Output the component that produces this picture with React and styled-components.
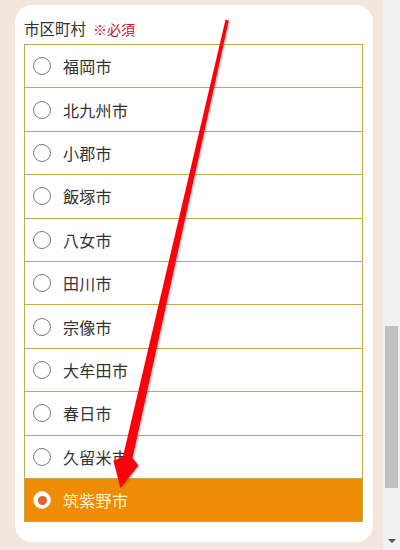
import React from 'react'
import styled, { createGlobalStyle } from 'styled-components'

const GlobalStyle = createGlobalStyle`
  html, body {
    margin: 0;
    padding: 0;
    background: #f3e6dd;
  }
  body {
    font-family: "Noto Sans CJK JP", "Noto Sans", sans-serif;
    color: #333;
  }
`

const Page = styled.div`
  position: relative;
  display: flex;
  width: 400px;
  height: 550px;
  overflow: hidden;
  background: #f3e6dd;
`

const Main = styled.div`
  flex: 1;
  padding: 5px 10px 0 15px;
`

const Card = styled.div`
  background: #fff;
  border-radius: 17px;
  padding: 12px 10px 20px 9px;
`

const Label = styled.div`
  display: flex;
  align-items: baseline;
  gap: 7px;
  height: 22px;
  line-height: 22px;
  margin-bottom: 5px;
  font-size: 15.5px;
  color: #333;
`

const Required = styled.span`
  font-size: 14px;
  color: #c4161c;
`

const List = styled.div`
  border: 1px solid #c6a84c;
  border-top: none;
`

const Row = styled.label`
  display: flex;
  align-items: center;
  gap: 12px;
  box-sizing: border-box;
  height: 43.4px;
  padding-left: 8px;
  border-top: 1px solid #c6a84c;
  background: ${p => (p.$checked ? '#ee8c04' : '#fff')};
  color: ${p => (p.$checked ? '#fff2c6' : '#333')};
  font-size: 16px;
  letter-spacing: 0.3px;
`

const Radio = styled.span`
  display: flex;
  align-items: center;
  justify-content: center;
  box-sizing: border-box;
  width: 18px;
  height: 18px;
  border-radius: 50%;
  background: #fff;
  border: ${p => (p.$checked ? '1px solid #f4e2d0' : '1.2px solid #7a7a7a')};

  &::after {
    content: '';
    display: ${p => (p.$checked ? 'block' : 'none')};
    width: 9px;
    height: 9px;
    border-radius: 50%;
    background: #e2622a;
  }
`

const Scrollbar = styled.div`
  display: flex;
  flex-direction: column;
  align-items: center;
  width: 17px;
  background: #f1f1f1;
`

const Thumb = styled.div`
  width: 13px;
  height: 162px;
  margin-top: 326px;
  background: #c1c1c1;
`

const DownArrow = styled.div`
  margin-top: auto;
  margin-bottom: 7px;
  width: 0;
  height: 0;
  border-left: 4px solid transparent;
  border-right: 4px solid transparent;
  border-top: 4px solid #505050;
`

const Overlay = styled.svg`
  position: absolute;
  left: 0;
  top: 0;
  pointer-events: none;
`

const cities = [
  '福岡市',
  '北九州市',
  '小郡市',
  '飯塚市',
  '八女市',
  '田川市',
  '宗像市',
  '大牟田市',
  '春日市',
  '久留米市',
  '筑紫野市',
]

const App = () => {
  const selected = '筑紫野市'
  return (
    <Page>
      <GlobalStyle />
      <Main>
        <Card>
          <Label>
            市区町村<Required>※必須</Required>
          </Label>
          <List>
            {cities.map(c => (
              <Row key={c} $checked={c === selected}>
                <Radio $checked={c === selected} />
                {c}
              </Row>
            ))}
          </List>
        </Card>
      </Main>
      <Scrollbar>
        <Thumb />
        <DownArrow />
      </Scrollbar>
      <Overlay width="400" height="550" viewBox="0 0 400 550">
        <defs>
          <filter id="sh" x="-20%" y="-5%" width="140%" height="110%">
            <feDropShadow dx="1" dy="1" stdDeviation="1.2" floodColor="#000" floodOpacity="0.25" />
          </filter>
        </defs>
        <polygon
          points="225.6,19.6 228.8,20.4 132.5,458 138.5,465.5 120.5,488 113.5,461 123,456.5"
          fill="#fb0007"
          filter="url(#sh)"
        />
      </Overlay>
    </Page>
  )
}

export default App
